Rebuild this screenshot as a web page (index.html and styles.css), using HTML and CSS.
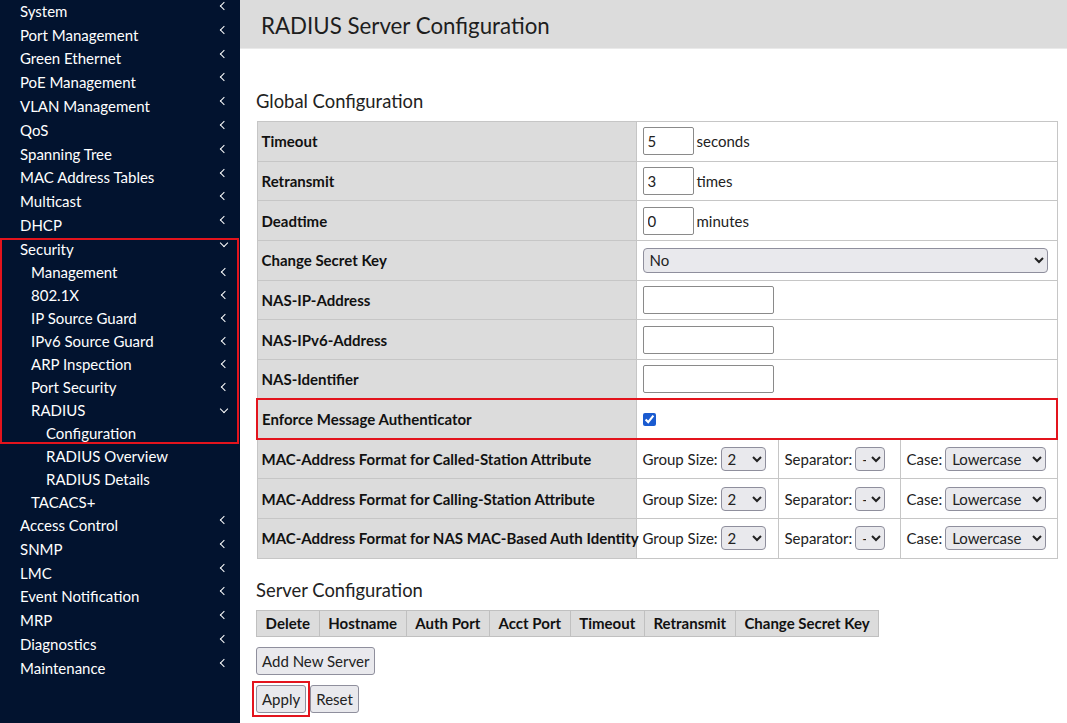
FILE: index.html
```html
<!DOCTYPE html>
<html>
<head>
<meta charset="utf-8">
<link rel="stylesheet" href="styles.css">
</head>
<body>
<div class="app">
  <nav class="sidebar">
    <ul class="menu">
      <li class="item top"><span>System</span><i class="chev left"></i></li>
      <li class="item top"><span>Port Management</span><i class="chev left"></i></li>
      <li class="item top"><span>Green Ethernet</span><i class="chev left"></i></li>
      <li class="item top"><span>PoE Management</span><i class="chev left"></i></li>
      <li class="item top"><span>VLAN Management</span><i class="chev left"></i></li>
      <li class="item top"><span>QoS</span><i class="chev left"></i></li>
      <li class="item top"><span>Spanning Tree</span><i class="chev left"></i></li>
      <li class="item top"><span>MAC Address Tables</span><i class="chev left"></i></li>
      <li class="item top"><span>Multicast</span><i class="chev left"></i></li>
      <li class="item top"><span>DHCP</span><i class="chev left"></i></li>
    </ul>
    <div class="highlight">
      <ul class="menu">
        <li class="item top"><span>Security</span><i class="chev down topchev"></i></li>
        <li class="item sub"><span>Management</span><i class="chev left mid"></i></li>
        <li class="item sub"><span>802.1X</span><i class="chev left mid"></i></li>
        <li class="item sub"><span>IP Source Guard</span><i class="chev left mid"></i></li>
        <li class="item sub"><span>IPv6 Source Guard</span><i class="chev left mid"></i></li>
        <li class="item sub"><span>ARP Inspection</span><i class="chev left mid"></i></li>
        <li class="item sub"><span>Port Security</span><i class="chev left mid"></i></li>
        <li class="item sub"><span>RADIUS</span><i class="chev down mid"></i></li>
        <li class="item subsub"><span>Configuration</span></li>
      </ul>
    </div>
    <ul class="menu">
      <li class="item subsub"><span>RADIUS Overview</span></li>
      <li class="item subsub"><span>RADIUS Details</span></li>
      <li class="item sub"><span>TACACS+</span></li>
      <li class="item top"><span>Access Control</span><i class="chev left"></i></li>
      <li class="item top"><span>SNMP</span><i class="chev left"></i></li>
      <li class="item top"><span>LMC</span><i class="chev left"></i></li>
      <li class="item top"><span>Event Notification</span><i class="chev left"></i></li>
      <li class="item top"><span>MRP</span><i class="chev left"></i></li>
      <li class="item top"><span>Diagnostics</span><i class="chev left"></i></li>
      <li class="item top"><span>Maintenance</span><i class="chev left"></i></li>
    </ul>
  </nav>
  <main class="main">
    <header class="pagehead"><h1>RADIUS Server Configuration</h1></header>
    <section class="content">
      <h2 class="section-title first">Global Configuration</h2>
      <table class="config">
        <colgroup>
          <col class="c-label"><col class="c-grp"><col class="c-sep"><col class="c-case">
        </colgroup>
        <tr><th>Timeout</th><td colspan="3"><div class="field"><input class="num" type="text" value="5"><span>seconds</span></div></td></tr>
        <tr><th>Retransmit</th><td colspan="3"><div class="field"><input class="num" type="text" value="3"><span>times</span></div></td></tr>
        <tr><th>Deadtime</th><td colspan="3"><div class="field"><input class="num" type="text" value="0"><span>minutes</span></div></td></tr>
        <tr><th>Change Secret Key</th><td colspan="3"><div class="field"><select class="sel wide"><option>No</option></select></div></td></tr>
        <tr><th>NAS-IP-Address</th><td colspan="3"><div class="field"><input class="addr" type="text"></div></td></tr>
        <tr><th>NAS-IPv6-Address</th><td colspan="3"><div class="field"><input class="addr" type="text"></div></td></tr>
        <tr><th>NAS-Identifier</th><td colspan="3"><div class="field"><input class="addr" type="text"></div></td></tr>
        <tr class="marked"><th>Enforce Message Authenticator</th><td colspan="3"><div class="field"><input class="check" type="checkbox" checked></div></td></tr>
        <tr><th>MAC-Address Format for Called-Station Attribute</th>
          <td><div class="field"><span>Group Size:</span><select class="sel grp"><option>2</option></select></div></td>
          <td><div class="field"><span>Separator:</span><select class="sel sep"><option>-</option></select></div></td>
          <td><div class="field"><span>Case:</span><select class="sel case"><option>Lowercase</option></select></div></td></tr>
        <tr><th>MAC-Address Format for Calling-Station Attribute</th>
          <td><div class="field"><span>Group Size:</span><select class="sel grp"><option>2</option></select></div></td>
          <td><div class="field"><span>Separator:</span><select class="sel sep"><option>-</option></select></div></td>
          <td><div class="field"><span>Case:</span><select class="sel case"><option>Lowercase</option></select></div></td></tr>
        <tr><th>MAC-Address Format for NAS MAC-Based Auth Identity</th>
          <td><div class="field"><span>Group Size:</span><select class="sel grp"><option>2</option></select></div></td>
          <td><div class="field"><span>Separator:</span><select class="sel sep"><option>-</option></select></div></td>
          <td><div class="field"><span>Case:</span><select class="sel case"><option>Lowercase</option></select></div></td></tr>
      </table>

      <h2 class="section-title second">Server Configuration</h2>
      <table class="servers">
        <tr><th>Delete</th><th>Hostname</th><th>Auth Port</th><th>Acct Port</th><th>Timeout</th><th>Retransmit</th><th>Change Secret Key</th></tr>
      </table>
      <div class="actions">
        <button class="btn">Add New Server</button>
      </div>
      <div class="actions bottom">
        <span class="apply-mark"><button class="btn">Apply</button></span>
        <button class="btn">Reset</button>
      </div>
    </section>
  </main>
</div>
</body>
</html>
```

FILE: styles.css
```css
* { box-sizing: border-box; }
html, body { margin: 0; padding: 0; }
body {
  font-family: Lato, "Liberation Sans", sans-serif;
  color: #1e1e1e;
  background: #fff;
  width: 1067px;
  height: 723px;
  overflow: hidden;
}
.app { display: flex; height: 723px; }

/* Sidebar */
.sidebar {
  width: 240px;
  flex: 0 0 240px;
  background: #02132f;
  color: #fff;
  margin-top: -1px;
}
.menu { list-style: none; margin: 0; padding: 0; }
.item {
  position: relative;
  display: flex;
  align-items: center;
  font-size: 15px;
  white-space: nowrap;
}
.item.top { height: 23.8px; padding-left: 20px; }
.item.sub { height: 22.95px; padding-left: 31px; }
.item.subsub { height: 22.95px; padding-left: 46px; }
.highlight {
  outline: 2px solid #e3141d;
  outline-offset: -2px;
  width: 239px;
  margin-top: 1px;
}
.highlight .item.top { height: 22.8px; }
.chev {
  position: absolute;
  left: 219px;
  top: 3px;
  width: 8px;
  height: 8px;
}
.chev.mid { top: 50%; margin-top: -4px; left: 220px; }
.chev.topchev { top: 2px; left: 220px; }
.chev::before {
  content: "";
  position: absolute;
  width: 5px;
  height: 5px;
  border-left: 1.6px solid #fff;
  border-bottom: 1.6px solid #fff;
}
.chev.left::before { left: 2px; top: 1px; transform: rotate(45deg); }
.chev.down::before { left: 1px; top: 0px; transform: rotate(-45deg); }

/* Main */
.main { flex: 1; min-width: 0; }
.pagehead {
  background: #dcdcdc;
  height: 49px;
  display: flex;
  align-items: center;
  padding: 3px 0 0 21px;
  border-bottom: 1px solid #eaeaea;
}
.pagehead h1 {
  margin: 0;
  font-weight: 400;
  font-size: 22.3px;
  color: #1e1e1e;
}
.content { padding: 0 11px 0 16px; }
.section-title {
  font-weight: 400;
  font-size: 18.4px;
  margin: 0;
  height: 31px;
  line-height: 24px;
  color: #222;
}
.section-title.first { margin-top: 40px; height: 32px; }
.section-title.second { margin-top: 19px; height: 32px; }

table { border-collapse: collapse; }
.config { width: 800px; table-layout: fixed; }
.c-label { width: 379px; }
.c-grp { width: 142px; }
.c-sep { width: 122px; }
.c-case { width: 157px; }
.config th, .config td {
  border: 1px solid #c6c6c6;
  height: 39.7px;
  padding: 0 0 0 4px;
  font-size: 15px;
  text-align: left;
  white-space: nowrap;
}
.config th {
  background: #dcdcdc;
  font-weight: 700;
  color: #111;
}
.config td { padding-left: 6px; color: #222; }
.field { display: flex; align-items: center; gap: 3px; }
.config tr.marked th, .config tr.marked td { border-top: 2px solid #e3141d; border-bottom: 2px solid #e3141d; }
.config tr.marked th { border-left: 2px solid #e3141d; }
.config tr.marked td { border-right: 2px solid #e3141d; }

input.num, input.addr {
  height: 28px;
  border: 1px solid #8a8a8a;
  border-radius: 2px;
  font-family: Lato, sans-serif;
  font-size: 15px;
  padding: 0 4px;
  color: #222;
  margin: 0;
}
input.num { width: 51px; }
input.addr { width: 131px; }
input.check {
  width: 13px; height: 13px; margin: 0;
  accent-color: #1a5bd0;
}
.sel {
  height: 24px;
  border: 1px solid #8f8f9d;
  border-radius: 4px;
  background: #e9e9ed;
  font-family: Lato, sans-serif;
  font-size: 15px;
  color: #222;
  padding: 0 2px;
  margin: 0;
}
.sel.wide { width: 405px; height: 25px; }
.sel.grp { width: 45px; }
.sel.sep { width: 30px; }
.sel.case { width: 101px; }

.servers th {
  background: #dcdcdc;
  border: 1px solid #c0c0c0;
  height: 26px;
  padding: 0 8.6px;
  font-size: 15px;
  font-weight: 700;
  color: #111;
  white-space: nowrap;
}
.actions { margin-top: 10px; display: flex; gap: 4px; }
.actions.bottom { margin-top: 10px; }
.btn {
  font-family: Lato, sans-serif;
  font-size: 15px;
  color: #222;
  background: #e9e9ed;
  border: 1px solid #8f8f9d;
  border-radius: 3px;
  height: 28px;
  padding: 0 5px;
}
.apply-mark {
  display: inline-block;
  outline: 2px solid #e3141d;
  outline-offset: 2px;
}
.apply-mark .btn { display: block; }
```
